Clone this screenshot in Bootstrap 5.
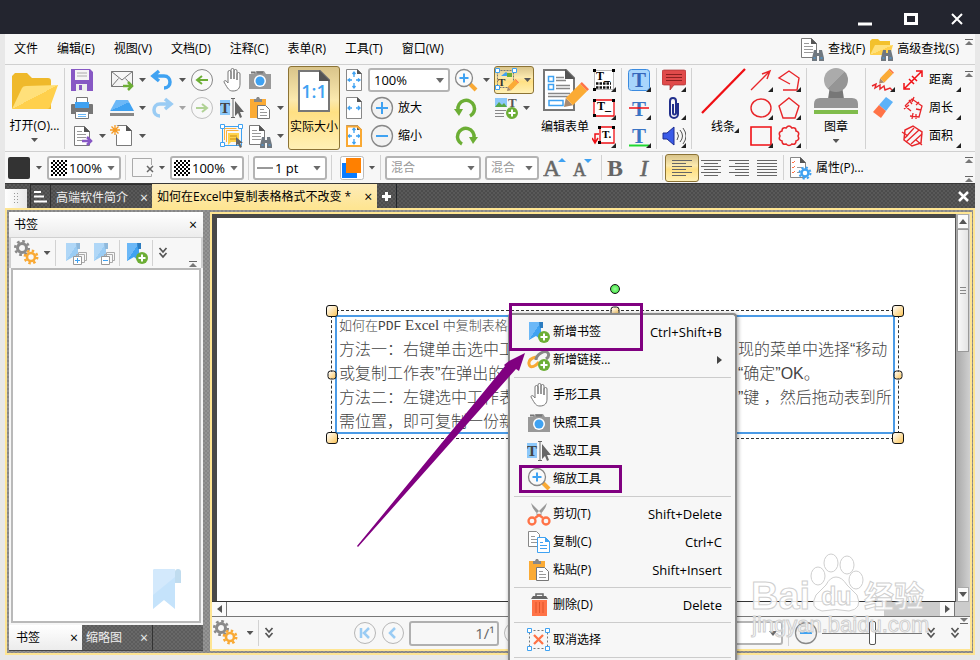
<!DOCTYPE html>
<html lang="zh-CN">
<head>
<meta charset="utf-8">
<meta name="viewport" content="width=device-width, initial-scale=1">
<title>PDF 编辑器</title>
<link href="https://cdn.jsdelivr.net/npm/bootstrap@5.3.0/dist/css/bootstrap.min.css" rel="stylesheet">
<style>
  :root { --gold: #fee592; --bar: #f7f7f7; --line: #d0d0d0; --purple: #800080; }
  body { font: 12px/16px "Open Sans", "Noto Sans CJK SC", sans-serif; background: #e8e8e8; color: #000; }
  button { font: inherit; color: inherit; background: none; border: 0; padding: 0; line-height: 16px; }
  svg { display: block; flex: none; }
  .app-title { height: 34px; background: #23252f; }
  .app-title button { width: 46px; height: 34px; display: flex; align-items: center; justify-content: center; padding-top: 4px; }
  .app-main { margin: 0 5px; }
  .bar-menu { height: 31px; background: var(--bar); border-bottom: 1px solid var(--line); }
  .bar-menu .item { padding: 0 9px; margin-right: 1px; }
  .bar-ribbon { height: 87px; background: var(--bar); border-bottom: 1px solid var(--line); padding-top: 1px; }
  .bar-format { height: 31px; background: var(--bar); padding-left: 2px; }
  .vsep { width: 1px; background: #d2d2d2; align-self: stretch; margin: 2px 5px; flex: none; }
  .bar-format .vsep { margin: 3px 4px; }
  .bar-format .tight { margin: 3px 2px; }
  .stack { display: flex; flex-direction: column; flex: none; }
  .gap-after { margin-right: 6px; }
  .ic { width: 24px; height: 28px; display: flex; align-items: center; justify-content: center; flex: none; position: relative; }
  .drop { width: 40px; justify-content: flex-start; gap: 5px; }
  .drop::after, .caret::after { content: ""; width: 7px; height: 4px; background: #555; clip-path: polygon(0 0, 100% 0, 50% 100%); }
  .caret { width: 16px; height: 28px; display: flex; align-items: center; justify-content: center; }
  .caret.low { height: 12px; }
  .more::after { content: ""; position: absolute; right: 0; bottom: 2px; width: 5px; height: 5px; background: #222; clip-path: polygon(100% 0, 100% 100%, 0 100%); }
  .faded { opacity: .5; }
  .tall { display: flex; flex-direction: column; align-items: center; width: 52px; height: 84px; position: relative; flex: none; white-space: nowrap; }
  .tall.wide { width: 59px; }
  .tall.mid { width: 54px; }
  .tall.slim { width: 48px; }
  .hot { background: linear-gradient(#d9c48a, #fbe9ae 40%, #ffe083 55%, #fff0b5); border: 1px solid #8c7335; border-radius: 3px; }
  .pick { display: flex; align-items: center; position: relative; width: 74px; height: 24px; background: #fff; border: 2px solid #b4b4b4; border-radius: 3px; padding-left: 2px; flex: none; }
  .pick.zoomer { width: 82px; margin: 2px 0; }
  .pick.face { width: 96px; }
  .pick.size { width: 54px; }
  .pick.view { width: 150px; }
  .pick::after { content: ""; position: absolute; right: 4px; top: 8px; width: 8px; height: 5px; background: #6a6a6a; clip-path: polygon(0 0, 100% 0, 50% 100%); }
  .pick select { appearance: none; border: 0; background: none; flex: 1; min-width: 0; padding: 0 2px; font-size: 13px; line-height: 18px; outline: 0; color: #000; }
  .pick select.dim { font-size: 12px; color: #999; }
  .check { width: 16px; height: 16px; background: conic-gradient(#000 25%, #fff 0 50%, #000 0 75%, #fff 0) 0 0/4px 4px; }
  .zoomlab { width: 78px; height: 28px; display: flex; align-items: center; gap: 4px; padding-left: 2px; }
  .overflow-col { width: 12px; padding: 4px 2px; }
  .weave { background: repeating-conic-gradient(#4c4c4c 0 25%, #595959 0 50%) 0 0/4px 4px; }
  .bar-tabs { height: 25px; border-top: 1px solid #383838; color: #eee; }
  .bar-tabs .grip { width: 22px; background: linear-gradient(90deg, #fff, #e8e8e8); margin-top: 5px; }
  .bar-tabs .doc { gap: 12px; padding: 2px 4px 0 5px; border: 1px solid #2f2f2f; border-width: 1px 0 0 1px; }
  .bar-tabs .listing { width: 20px; padding: 0 3px; margin-left: 3px; }
  .bar-tabs .active-doc { background: linear-gradient(#fdebb8, var(--gold)); color: #000; padding: 1px 5px 0 5px; gap: 13px; }
  .bar-tabs .closer { padding: 0 6px; }
  .x { font-size: 14px; line-height: 12px; }
  .work { background: repeating-conic-gradient(#868686 0 25%, #949494 0 50%) 0 0/4px 4px; border: 2px solid var(--gold); padding: 2px 1px 2px 2px; gap: 7px; margin-bottom: 5px; min-height: 0; }
  .side { width: 194px; }
  .side-head { height: 25px; background: linear-gradient(#fff, #ececec); padding: 0 6px 0 5px; }
  .side-tools { height: 31px; background: var(--bar); border: 1px solid var(--line); border-width: 1px 2px 0; }
  .side-tools .vsep { margin: 2px 5px 2px 3px; }
  .side-list { background: #fff; border: 2px solid #f6f6f6; border-top: 0; box-shadow: inset 0 0 0 2px #b9b9b9; padding: 0 20px 14px; }
  .side-tabs { height: 26px; background: repeating-conic-gradient(#5c5c5c 0 25%, #686868 0 50%) 0 0/4px 4px; color: #eee; border-bottom: 1px solid #444; }
  .side-tabs .t1 { width: 73px; background: linear-gradient(#fff, #ececec); color: #000; padding: 0 4px 0 7px; }
  .side-tabs .t2 { width: 71px; padding: 0 4px; border-right: 1px solid #333; }
  .docframe { border: 2px solid var(--gold); min-width: 0; background: var(--bar); }
  .doc-row { min-height: 0; }
  .canvas { background: #484848; padding: 4px 0 0 5px; border-bottom: 1px solid #333; min-width: 0; }
  .page { background: #fff; position: relative; overflow: hidden; height: 100%; }
  .vscroll { width: 15px; background: linear-gradient(90deg, #a8a8a8, #d0d0d0); border-left: 1px solid #555; padding: 0 1px; }
  .vscroll .end { height: 15px; background: #fafafa; border: 1px solid #aaa; display: flex; align-items: center; justify-content: center; }
  .vscroll .thumb { height: 123px; background: linear-gradient(90deg, #f8f8f8, #e4e4e4); border: 1px solid #999; display: flex; align-items: center; justify-content: center; }
  .hscroll { height: 15px; border-bottom: 1px solid #777; background: #ccc; padding-right: 15px; }
  .hscroll .end { width: 15px; background: #fafafa; border-right: 1px solid #777; display: flex; align-items: center; justify-content: center; }
  .hscroll .bar { background: #fafafa; }
  .hscroll .rest { width: 56px; }
  .status { height: 32px; padding: 0 2px; }
  .status .vsep { margin: 3px 5px; }
  .status .last { margin-left: 14px; }
  .pageno { width: 90px; height: 25px; border: 2px solid #b0b0b0; border-radius: 3px; background: var(--bar); text-align: right; font-size: 15px; padding: 0 2px; color: #666; }
  .track { width: 100px; height: 24px; appearance: none; background: linear-gradient(#777, #777) 0 50%/100% 1px no-repeat; margin: 0 4px; }
  .track::-webkit-slider-thumb { appearance: none; width: 7px; height: 24px; border: 1px solid #555; border-radius: 2px; background: #fff; }
  .annot { position: absolute; left: 114px; top: 92px; width: 568px; height: 129px; border: 1px dashed #333; }
  .annot .frame { position: absolute; inset: 4px 3px; border: 2px solid #4a9ae6; padding: 0 0 0 2px; overflow: hidden; font: 16px/24px "Liberation Sans", "Noto Sans CJK SC", sans-serif; font-weight: 300; color: #444; white-space: nowrap; }
  .annot .cols { display: grid; grid-template-columns: 1fr 155px; }
  .annot .first { font-size: 13px; line-height: 17px; padding-bottom: 3px; }
  .annot .first b { font: 15px/16px "Liberation Serif", serif; }
  .annot .first i { font: 13px/16px "Liberation Mono", monospace; }
  .knob { position: absolute; width: 12px; height: 12px; border: 1px solid #111; border-radius: 3px; background: linear-gradient(135deg, #fff, #fcc65a); transform: translate(-50%, -50%); }
  .knob.sm { width: 9px; height: 9px; }
  .knob.rot { top: -22px; width: 10px; height: 10px; border-radius: 50%; background: radial-gradient(#9f9, #3d3); }
  .popup { position: absolute; left: 508px; top: 313px; width: 229px; height: 347px; overflow: hidden; background: var(--bar); border: 2px solid #8a8a8a; border-bottom: 0; border-radius: 4px 4px 0 0; padding: 3px 4px; box-shadow: 1px 1px 4px rgba(0,0,0,.4); }
  .popup button { display: flex; align-items: center; width: 100%; height: 28px; padding: 0 9px 0 13px; gap: 2px; text-align: left; }
  .popup kbd { margin-left: auto; background: none; color: #000; font: 13px/16px "Open Sans", sans-serif; padding: 0; }
  .popup hr { margin: 3px 0; border: 0; border-top: 1px solid #ccc; opacity: 1; }
  .note { position: absolute; border: 3px solid var(--purple); }
  .note-a { left: 509px; top: 303px; width: 134px; height: 48px; }
  .note-b { left: 519px; top: 465px; width: 103px; height: 28px; }
  .over { position: absolute; left: 0; top: 0; pointer-events: none; }
</style>
<script src="https://cdn.jsdelivr.net/npm/bootstrap@5.3.0/dist/js/bootstrap.bundle.min.js"></script>
</head>
<body class="vh-100 d-flex flex-column overflow-hidden position-relative">

<svg width="0" height="0" class="position-absolute" aria-hidden="true">
  <defs>
    <linearGradient id="blueg" x1="0" y1="0" x2="1" y2="1"><stop offset=".5" stop-color="#6cb8f7"/><stop offset=".5" stop-color="#3fa2f2"/></linearGradient>
    <linearGradient id="greyg" x1="0" y1="0" x2="1" y2="1"><stop offset=".5" stop-color="#ababab"/><stop offset=".5" stop-color="#959595"/></linearGradient>
    <linearGradient id="yelg" x1="0" y1="0" x2="1" y2="1"><stop offset=".5" stop-color="#ffe07a"/><stop offset=".5" stop-color="#ffd04c"/></linearGradient>
  </defs>
</svg>
<svg class="d-none" aria-hidden="true">
  <symbol id="paper" viewBox="0 0 24 24"><path d="M4.500 2.500h10l5 5v14h-15z" fill="#fff" stroke="#7a7a7a"/><path d="M14 2v6h6z" fill="#555"/><path d="M7 7.500h5M7 10.500h9M7 13.500h9M7 16.500h9" stroke="#999"/></symbol>
  <symbol id="save" viewBox="0 0 24 24"><path d="M1 1h19l3 3v19H1z" fill="#8758c4"/><path d="M5 2h14v10H5z" fill="#f5f5f5"/><path d="M7 5h10M7 8h10" stroke="#aaa"/><path d="M6 16h11v7H6z" fill="#eee"/><path d="M9 17h3v5H9z" fill="#8758c4"/></symbol>
  <symbol id="print" viewBox="0 0 24 24"><path d="M6.500 1.500h11v7h-11z" fill="#fff" stroke="#777"/><path d="M1 9q0-1 1-1h20q1 0 1 1v9H1z" fill="#777"/><path d="M5 6h14v6H5z" fill="#3fa2f2"/><path d="M5.500 15.500h13v7h-13z" fill="#fff" stroke="#777"/><path d="M8 18.500h8M8 20.500h8" stroke="#6cb8f7"/></symbol>
  <symbol id="export" viewBox="0 0 24 24"><use href="#paper"/><path d="M12 17h8M17 13l4 4-4 4" fill="none" stroke="#8758c4" stroke-width="2.500"/></symbol>
  <symbol id="mail" viewBox="0 0 24 24"><path d="M1.500 3.500h21v15h-21zl10.500 8.500L22.500 3.500M1.500 18.500l7-8M22.500 18.500l-7-8" fill="#f4f4f4" stroke="#777"/><path d="M13 18h8M18 14l4 4-4 4" fill="none" stroke="#6cae35" stroke-width="2.500"/></symbol>
  <symbol id="scan" viewBox="0 0 24 24"><path d="M6 4h12l6 11H0z" fill="url(#blueg)"/><path d="M0 17h24v3H0z" fill="#888"/></symbol>
  <symbol id="newdoc" viewBox="0 0 24 24"><path d="M6.500 1.500h10l5 5v15h-15z" fill="#fff" stroke="#7a7a7a"/><path d="M16 1v6h6z" fill="#555"/><circle cx="5" cy="6" r="5" fill="#f7f7f7"/><path d="M5 1v10M0 6h10M1.500 2.500l7 7M8.500 2.500l-7 7" stroke="#f59a23" stroke-width="1.300"/></symbol>
  <symbol id="undo" viewBox="0 0 24 24"><path d="M9 3 3 8l6 5M4 8h10c8 0 8 12 0 12" fill="none" stroke="#3fa2f2" stroke-width="3.500"/></symbol>
  <symbol id="redo" viewBox="0 0 24 24"><path d="M15 3l6 5-6 5M20 8H10C2 8 2 20 10 20" fill="none" stroke="#3fa2f2" stroke-width="3.500"/></symbol>
  <symbol id="back" viewBox="0 0 24 24"><circle cx="12" cy="12" r="10.500" fill="#f9f9f9" stroke="#888"/><path d="M18 12H8M12 8l-5 4 5 4" fill="none" stroke="#6cae35" stroke-width="2"/></symbol>
  <symbol id="fwd" viewBox="0 0 24 24"><circle cx="12" cy="12" r="10.500" fill="#f9f9f9" stroke="#888"/><path d="M6 12h10M12 8l5 4-5 4" fill="none" stroke="#6cae35" stroke-width="2"/></symbol>
  <symbol id="hand" viewBox="0 0 24 24"><path d="M8 13V4a1.500 1.500 0 0 1 3 0v7V2a1.500 1.500 0 0 1 3 0v9V3a1.500 1.500 0 0 1 3 0v9V6a1.500 1.500 0 0 1 3 0v10c0 4-2 7-7 7-4 0-5-2-9-9 0-2 2-2 4 1z" fill="#fff" stroke="#777"/></symbol>
  <symbol id="camera" viewBox="0 0 24 24"><path d="M1 6h5l2-3h8l2 3h5v15H1z" fill="#999"/><path d="M3 4.500h4M9 4.500h6" stroke="#777" stroke-width="2"/><circle cx="12" cy="13" r="6" fill="#fff"/><circle cx="12" cy="13" r="4.500" fill="#3fa2f2"/></symbol>
  <symbol id="seltext" viewBox="0 0 24 24"><path d="M0 4h10v15H0z" fill="#8cc8fa"/><text x="0" y="17" font-family="Liberation Serif" font-weight="bold" font-size="15" fill="#444">T</text><path d="M11 2.500h4M13 3v18M11 21.500h4" stroke="#666"/><path d="M15 5v15l3-3 2 5 2-1-2-5h4z" fill="#666"/></symbol>
  <symbol id="selobj" viewBox="0 0 24 24"><path d="M2.500 2.500h19v19h-19z" fill="none" stroke="#3fa2f2"/><path d="M4.500 16V4.500h12M6.500 18V6.500h12" stroke="#fbb03b" fill="none"/><path d="M8 9h11v9h-8l-3 3z" fill="#ffd24c"/><path d="M10 12h7M10 15h7" stroke="#c88a10"/><path d="M.500.500h4v4h-4zM18.500.500h4v4h-4zM.500 18.500h4v4h-4z" fill="#fff" stroke="#3fa2f2"/><path d="M16 13v9l2-2 2 4 2-1-2-4h3z" fill="#666"/></symbol>
  <symbol id="paste" viewBox="0 0 24 24"><path d="M2 3h16v19H2z" fill="#fbab35"/><path d="M6 3h2l1-2h2l1 2h2v3H6z" fill="#888"/><path d="M9.500 9.500h8l4 4v9h-12z" fill="#fff" stroke="#777"/><path d="M12 13.500h4M12 16.500h7M12 19.500h7" stroke="#999"/></symbol>
  <symbol id="bino" viewBox="0 0 12 12"><path d="M2 1h3v3h2V1h3l2 8v3H7V7H5v5H0V9z" fill="#707880"/><path d="M1.500 9h2M8.500 9h2" stroke="#3fa2f2"/></symbol>
  <symbol id="finddoc" viewBox="0 0 24 24"><use href="#paper" x="-3" y="-1" width="24" height="24"/><use href="#bino" x="12" y="12" width="12" height="12"/></symbol>
  <symbol id="findadv" viewBox="0 0 24 24"><path d="M1 18V4l2-2h6l2 2h10v14z" fill="#f3c12c"/><path d="M1 18 6 8h18l-3 10z" fill="url(#yelg)"/><use href="#bino" x="12" y="12" width="12" height="12"/></symbol>
  <symbol id="fitp" viewBox="0 0 20 24"><path d="M2.500 1.500h11l4 4v17h-15z" fill="#fff" stroke="#888"/><path d="M13 1v5h5z" fill="#555"/><path d="M10 4v5M10 15v5M4 12h4M12 12h4M8.500 6 10 4l1.500 2M8.500 18l1.500 2 1.500-2M6 10.500 4 12l2 1.500M14 10.500l2 1.500-2 1.500" stroke="#3fa2f2" fill="none" stroke-width="1.300"/></symbol>
  <symbol id="fitw" viewBox="0 0 20 24"><path d="M2.500 1.500h11l4 4v17h-15z" fill="#fff" stroke="#888"/><path d="M13 1v5h5z" fill="#555"/><path d="M4 12h4M12 12h4M6 10 4 12l2 2M14 10l2 2-2 2" stroke="#3fa2f2" fill="none" stroke-width="1.300"/></symbol>
  <symbol id="mag" viewBox="0 0 24 24"><path d="m16 16 6 6" stroke="#f9a934" stroke-width="4"/><circle cx="10" cy="10" r="8.500" fill="#fafafa" stroke="#888" stroke-width="1.300"/><path d="M5.500 10h9M10 5.500v9" stroke="#3fa2f2" stroke-width="2"/></symbol>
  <symbol id="plusc" viewBox="0 0 24 24"><circle cx="12" cy="12" r="10.500" fill="#f2f2f2" stroke="#888" stroke-width="1.300"/><path d="M6 12h12M12 6v12" stroke="#3fa2f2" stroke-width="2"/></symbol>
  <symbol id="minusc" viewBox="0 0 24 24"><circle cx="12" cy="12" r="10.500" fill="#f2f2f2" stroke="#888" stroke-width="1.300"/><path d="M6 12h12" stroke="#3fa2f2" stroke-width="2"/></symbol>
  <symbol id="rotl" viewBox="0 0 24 24"><path d="M16 20a8.300 8.300 0 1 0-12-6" fill="none" stroke="#6cae35" stroke-width="3.500"/><path d="M0 13h9l-4 7z" fill="#6cae35"/></symbol>
  <symbol id="rotr" viewBox="0 0 24 24"><path d="M8 20a8.300 8.300 0 1 1 12-6" fill="none" stroke="#6cae35" stroke-width="3.500"/><path d="M24 13h-9l4 7z" fill="#6cae35"/></symbol>
  <symbol id="pencil" viewBox="0 0 14 14"><path d="m0 14 1-5 4 4z" fill="#a88a70"/><path d="M1 9 9 1l4 4-8 8z" fill="#fbab35"/><path d="m9 1 1-1 4 4-1 1z" fill="#ff7347"/></symbol>
  <symbol id="editobj" viewBox="0 0 24 24"><path d="M2.500 2.500h16v17h-16z" fill="none" stroke="#777" stroke-dasharray="2 1"/><path d="M6 8l5-4 5 4z" fill="#3fa2f2"/><path d="M12 5h5v4h-5z" fill="#6cae35"/><text x="3" y="18" font-family="Liberation Serif" font-weight="bold" font-size="11" fill="#333">T</text><path d="M.500.500h4v4h-4zM17.500.500h4v4h-4zM.500 17.500h4v4h-4z" fill="#fff" stroke="#3fa2f2"/><use href="#pencil" x="12" y="11" width="12" height="12"/></symbol>
  <symbol id="addobj" viewBox="0 0 24 24"><path d="M1 2h12v9H1z" fill="#8cc8fa"/><path d="m1 11 4-5 3 3 2-2 3 4z" fill="#58a848"/><text x="14" y="11" font-family="Liberation Serif" font-weight="bold" font-size="13" fill="#555">T</text><path d="M1 14.500h11M1 17.500h9M1 20.500h9" stroke="#888"/><circle cx="18" cy="17" r="6" fill="#6cae35"/><path d="M14.500 17h7M18 13.500v7" stroke="#fff" stroke-width="2"/></symbol>
  <symbol id="tb1" viewBox="0 0 24 24"><path d="M2.500 2.500h19v19h-19z" fill="#fff" stroke="#777" stroke-dasharray="1 1"/><text x="4" y="12" font-family="Liberation Serif" font-weight="bold" font-size="12">T_</text><path d="M4 15.500h15M4 19.500h15" stroke="#111" stroke-width="2.500" stroke-dasharray="2.500 1"/><path d="M1 1h3v3H1zM20 1h3v3h-3zM1 20h3v3H1z"/></symbol>
  <symbol id="tb2" viewBox="0 0 24 24"><path d="M2 4h20v16H2z" fill="#fff" stroke="#f00f14" stroke-width="1.300"/><text x="5" y="14" font-family="Liberation Serif" font-weight="bold" font-size="12">T_</text><path d="M1 3h3v3H1zM20 3h3v3h-3zM1 18h3v3H1z"/></symbol>
  <symbol id="tb3" viewBox="0 0 24 24"><path d="M8 3h14v16H8z" fill="#fff" stroke="#f00f14" stroke-width="1.300"/><text x="10" y="14" font-family="Liberation Serif" font-weight="bold" font-size="11">T.</text><path d="M7 10H3v8M0 14l3 5 3-5" stroke="#f00f14" fill="none" stroke-width="1.500"/><path d="M6 2h3v3H6zM20 2h3v3h-3zM6 17h3v3H6z"/></symbol>
  <symbol id="th1" viewBox="0 0 24 24"><rect x="1.500" y="1.500" width="21" height="21" rx="3" fill="#a8d6fc" stroke="#3b8be0"/><text x="5" y="19" font-family="Liberation Serif" font-weight="bold" font-size="21" fill="#3566bb">T</text></symbol>
  <symbol id="th2" viewBox="0 0 24 24"><text x="5" y="20" font-family="Liberation Serif" font-weight="bold" font-size="21" fill="#3b74c4">T</text><path d="M2 12h20" stroke="#f00f14" stroke-width="1.500"/></symbol>
  <symbol id="th3" viewBox="0 0 24 24"><text x="5" y="19" font-family="Liberation Serif" font-weight="bold" font-size="21" fill="#3b74c4">T</text><path d="M2 21.500h20" stroke="#20d830" stroke-width="2"/></symbol>
  <symbol id="comment" viewBox="0 0 24 24"><path d="M2 2h20q2 0 2 2v11q0 2-2 2H12l-4 5v-5H2q-2 0-2-2V4q0-2 2-2z" fill="#e04a4a" stroke="#a83030" stroke-width=".7"/><path d="M4 6.500h16M4 9.500h16M4 12.500h16" stroke="#8c2020"/></symbol>
  <symbol id="clip" viewBox="0 0 24 24"><path d="M16 7v11a4 4 0 0 1-8 0V5a3 3 0 0 1 6 0v12a1.500 1.500 0 0 1-3 0V8" fill="none" stroke="#22308c" stroke-width="2"/></symbol>
  <symbol id="sound" viewBox="0 0 24 24"><path d="M1 9h4l7-6v18l-7-6H1z" fill="#3a5be8" stroke="#1c2c90"/><path d="M15 8q3 4 0 8M18 6q5 6 0 12M21 4q6 8 0 16" fill="none" stroke="#555"/></symbol>
  <symbol id="arrow" viewBox="0 0 24 24"><path d="M2 22 20 4M13 6l8-3-3 8" fill="none" stroke="#e8262a" stroke-width="1.400"/></symbol>
  <symbol id="oval" viewBox="0 0 24 24"><ellipse cx="12" cy="12" rx="10" ry="9" fill="none" stroke="#e8262a" stroke-width="1.400"/></symbol>
  <symbol id="rect" viewBox="0 0 24 24"><path d="M2 3h20v18H2z" fill="none" stroke="#f00f14" stroke-width="1.600"/></symbol>
  <symbol id="poly1" viewBox="0 0 24 24"><path d="m13 16-11-6L12 3l10 7-2 12H6" fill="none" stroke="#e8262a" stroke-width="1.400"/></symbol>
  <symbol id="poly2" viewBox="0 0 24 24"><path d="m12 2 10 8-4 12H6L2 10z" fill="none" stroke="#e8262a" stroke-width="1.400"/></symbol>
  <symbol id="cloud" viewBox="0 0 24 24"><path d="M9 4q3-4 6 0 4-1 4 3 4 1 2 5 2 4-2 5 0 4-4 3-3 3-6 0-4 1-4-3-4-1-2-5-2-4 2-5 0-4 4-3z" fill="none" stroke="#e8262a" stroke-width="1.600"/></symbol>
  <symbol id="draw" viewBox="0 0 24 24"><use href="#pencil" x="8" y="0" width="15" height="16"/><path d="M1 18l4-2-1 4 5-3v4l4-3 1 4 5-2 3 3" fill="none" stroke="#e8262a" stroke-width="1.400"/></symbol>
  <symbol id="eraser" viewBox="0 0 24 24"><path d="m15 1 7 5-7 9-7-6z" fill="#5cb2f8"/><path d="m8 9 7 6-5 7-8-6z" fill="#ff7347"/></symbol>
  <symbol id="dist" viewBox="0 0 24 24"><path d="M4 20 20 4M3 15v6h6M15 3h6v6M8 11l5 5M11 8l5 5" fill="none" stroke="#f00f14" stroke-width="1.500"/></symbol>
  <symbol id="perim" viewBox="0 0 24 24"><path d="M4 10 11 3l10 7-3 11-9-1M4 10l6 5M13 1l-2 5M18 6l-3 3M8 4l3 4M3 13l5-4M20 14l-5-1M12 17l-1 6M15 18v5" fill="none" stroke="#e8262a" stroke-width="1.300"/></symbol>
  <symbol id="areai" viewBox="0 0 24 24"><path d="m12 2 9 6-1 11-9 3-8-6 1-10z" fill="none" stroke="#e8262a" stroke-width="1.500"/><path d="m4 14 9-10M5 18 18 6M10 20 21 10M1 8l6 4M15 16l6 5" stroke="#e8262a" stroke-width="1.300"/></symbol>
  <symbol id="gears" viewBox="0 0 26 26"><g fill="none" stroke="#8a8a8a"><circle cx="8" cy="8" r="4.500" stroke-width="3"/><circle cx="8" cy="8" r="6.800" stroke-width="2.500" stroke-dasharray="2.700 2.640"/></g><g fill="none" stroke="#f9a934"><circle cx="17" cy="17" r="4" stroke-width="2.600"/><circle cx="17" cy="17" r="6.200" stroke-width="2.500" stroke-dasharray="2.400 2.470"/></g></symbol>
  <symbol id="props" viewBox="0 0 24 24"><path d="M2.500 1.500h10l5 5v15h-15z" fill="#fff" stroke="#888"/><path d="M12 1v6h6z" fill="#555"/><path d="m4 6 1 1 2-2M4 11l1 1 2-2M4 16l1 1 2-2" fill="none" stroke="#ff7347"/><path d="M9 11.500h5M9 16.500h3" stroke="#999"/><circle cx="17" cy="17" r="3.500" fill="#fff" stroke="#3fa2f2" stroke-width="2.500"/><circle cx="17" cy="17" r="5.500" fill="none" stroke="#3fa2f2" stroke-width="2" stroke-dasharray="2.200 2.120"/></symbol>
  <symbol id="ribbonmark" viewBox="0 0 24 24"><path d="M2 2h12v18l-5-4-7 4z" fill="url(#blueg)"/><path d="M12 2h4v6h-3z" fill="#2c7cc0"/></symbol>
  <symbol id="bmadd" viewBox="0 0 24 24"><use href="#ribbonmark"/><circle cx="17" cy="17" r="6" fill="#6cae35"/><path d="M13.500 17h7M17 13.500v7" stroke="#fff" stroke-width="2"/></symbol>
  <symbol id="bmexp" viewBox="0 0 24 24"><use href="#ribbonmark" opacity=".5"/><path d="M14.500 15V11.500h8v8H20M12.500 17v-3.500h8v8H18" fill="none" stroke="#aaa"/><path d="M9.500 15.500h8v8h-8z" fill="#fff" stroke="#999"/><path d="M11 19.500h5M13.500 17v5" stroke="#3fa2f2"/></symbol>
  <symbol id="bmcol" viewBox="0 0 24 24"><use href="#ribbonmark" opacity=".5"/><path d="M14.500 15V11.500h8v8H20M12.500 17v-3.500h8v8H18" fill="none" stroke="#aaa"/><path d="M9.500 15.500h8v8h-8z" fill="#fff" stroke="#999"/><path d="M11 19.500h5" stroke="#3fa2f2"/></symbol>
  <symbol id="linkadd" viewBox="0 0 24 24"><path d="M9 9q-8 2-7 7t7 1l3-3" fill="none" stroke="#f9a934" stroke-width="3"/><path d="M9 12q0-4 5-7t7 0-2 6" fill="none" stroke="#888" stroke-width="3"/><circle cx="17" cy="17" r="6" fill="#6cae35"/><path d="M13.500 17h7M17 13.500v7" stroke="#fff" stroke-width="2"/></symbol>
  <symbol id="cut" viewBox="0 0 24 24"><path d="M4 1q2 8 9 13l2-2zM20 1q-2 8-9 13l-2-2z" fill="#999"/><g fill="none" stroke="#ff7347" stroke-width="2.300"><circle cx="5" cy="19" r="3.500"/><circle cx="19" cy="19" r="3.500"/><path d="m8 16 4-3 4 3"/></g></symbol>
  <symbol id="copy" viewBox="0 0 24 24"><path d="M1.500 1.500h8l3 3v12h-11z" fill="#fff" stroke="#888"/><path d="M4 6.500h4M4 9.500h6M4 12.500h6" stroke="#999"/><path d="M10.500 7.500h8l4 4v11h-12z" fill="#fff" stroke="#3fa2f2"/><path d="M18 7v5h5z" fill="#3fa2f2"/><path d="M13 12.500h3M13 15.500h7M13 18.500h7" stroke="#3fa2f2"/></symbol>
  <symbol id="trash" viewBox="0 0 24 24"><path d="M9 3V1h7v2" fill="none" stroke="#666" stroke-width="1.500"/><path d="M4 6l2-3h13l2 3z" fill="#666"/><path d="M5 7h15v16H5z" fill="#ff7347"/><path d="M9 9v11M12.500 9v11M16 9v11" stroke="#e0542a"/></symbol>
  <symbol id="desel" viewBox="0 0 24 24"><path d="M2.500 2.500h18v18h-18z" fill="none" stroke="#777" stroke-dasharray="2 2"/><path d="m7 7 9 9M16 7l-9 9" stroke="#ff7347" stroke-width="2.300"/><path d="M.500.500h4v4h-4zM18.500.500h4v4h-4zM.500 18.500h4v4h-4zM18.500 18.500h4v4h-4z" fill="#fff" stroke="#3fa2f2"/></symbol>
  <symbol id="ovf" viewBox="0 0 8 8"><path d="M0 1.500h8" stroke="#666"/><path d="m0 7 4-4 4 4z" fill="#777"/></symbol>
  <symbol id="chev" viewBox="0 0 10 12"><path d="m1.500 1 3.500 4 3.500-4M1.500 6 5 10l3.500-4" fill="none" stroke="#555" stroke-width="1.700"/></symbol>
  <symbol id="al" viewBox="0 0 22 18"><path d="M1 1.500h20M1 4.500h14M1 7.500h20M1 10.500h14M1 13.500h20M1 16.500h14" stroke="#666"/></symbol>
  <symbol id="ac" viewBox="0 0 22 18"><path d="M1 1.500h20M4 4.500h14M1 7.500h20M4 10.500h14M1 13.500h20M4 16.500h14" stroke="#666"/></symbol>
  <symbol id="ar" viewBox="0 0 22 18"><path d="M1 1.500h20M7 4.500h14M1 7.500h20M7 10.500h14M1 13.500h20M7 16.500h14" stroke="#666"/></symbol>
  <symbol id="aj" viewBox="0 0 22 18"><path d="M1 1.500h20M1 4.500h20M1 7.500h20M1 10.500h20M1 13.500h20M1 16.500h20" stroke="#666"/></symbol>
</svg>

<header class="app-title d-flex justify-content-end">
  <button aria-label="最小化"><svg width="14" height="14"><path d="M0 12h14" stroke="#fff" stroke-width="3"/></svg></button>
  <button aria-label="最大化"><svg width="14" height="12"><path d="M1.500 1.500h11v9h-11z" fill="none" stroke="#fff" stroke-width="3"/></svg></button>
  <button aria-label="关闭"><svg width="12" height="12"><path d="m1 1 10 10M11 1 1 11" stroke="#fff" stroke-width="2"/></svg></button>
</header>

<main class="app-main flex-grow-1 d-flex flex-column">
  <nav class="bar-menu d-flex align-items-center" aria-label="菜单">
    <button class="item">文件</button><button class="item">编辑(E)</button><button class="item">视图(V)</button><button class="item">文档(D)</button><button class="item">注释(C)</button><button class="item">表单(R)</button><button class="item">工具(T)</button><button class="item">窗口(W)</button>
    <button class="ms-auto d-flex align-items-center gap-1"><svg width="24" height="24"><use href="#finddoc"/></svg>查找(F)</button>
    <button class="ms-1 me-1 d-flex align-items-center gap-1"><svg width="24" height="24"><use href="#findadv"/></svg>高级查找(S)</button>
    <span class="overflow-col align-self-start"><svg width="8" height="8"><use href="#ovf"/></svg></span>
  </nav>

  <section class="bar-ribbon d-flex" aria-label="工具栏">
    <button class="tall wide"><svg width="48" height="52" viewBox="0 0 48 52"><path d="M1 43V10l3-3h12l5 5h16q3 0 3 3v28z" fill="#efb92b"/><path d="M1 43 11 22q1-2 4-2l32-1-8 22q-1 2-3 2z" fill="url(#yelg)"/></svg><span>打开(O)...</span><span class="caret low"></span></button>
    <div class="vsep ms-0"></div>
    <div class="stack"><button class="ic" aria-label="保存"><svg width="24" height="24"><use href="#save"/></svg></button><button class="ic" aria-label="打印"><svg width="24" height="24"><use href="#print"/></svg></button><button class="ic drop" aria-label="导出"><svg width="24" height="24"><use href="#export"/></svg></button></div>
    <div class="stack"><button class="ic drop" aria-label="邮件"><svg width="24" height="24"><use href="#mail"/></svg></button><button class="ic drop" aria-label="扫描"><svg width="24" height="24"><use href="#scan"/></svg></button><button class="ic drop" aria-label="新建"><svg width="24" height="24"><use href="#newdoc"/></svg></button></div>
    <div class="stack"><button class="ic drop" aria-label="撤销"><svg width="24" height="24"><use href="#undo"/></svg></button><button class="ic drop faded" aria-label="重做"><svg width="24" height="24"><use href="#redo"/></svg></button></div>
    <div class="stack gap-after"><button class="ic" aria-label="后退"><svg width="24" height="24"><use href="#back"/></svg></button><button class="ic faded" aria-label="前进"><svg width="24" height="24"><use href="#fwd"/></svg></button></div>
    <div class="stack me-1"><button class="ic" aria-label="手形"><svg width="24" height="24"><use href="#hand"/></svg></button><button class="ic" aria-label="选取"><svg width="24" height="24"><use href="#seltext"/></svg></button><button class="ic" aria-label="选取注释"><svg width="24" height="24"><use href="#selobj"/></svg></button></div>
    <div class="stack"><button class="ic" aria-label="快照"><svg width="24" height="24"><use href="#camera"/></svg></button><button class="ic drop" aria-label="剪贴板"><svg width="24" height="24"><use href="#paste"/></svg></button><button class="ic drop" aria-label="查找文档"><svg width="24" height="24"><use href="#finddoc"/></svg></button></div>
    <button class="tall hot"><svg width="36" height="52" viewBox="0 0 36 52"><path d="M3 4h21l9 9v31H3z" fill="#fff" stroke="#777" stroke-width="2"/><path d="M23 3v11h11z" fill="#555"/><text x="18" y="31" text-anchor="middle" font-family="Open Sans" font-size="18" font-weight="600" fill="#3fa2f2">1:1</text></svg>实际大小</button>
    <div class="stack mx-1"><button class="ic w-auto" aria-label="适合页面"><svg width="20" height="24"><use href="#fitp"/></svg></button><button class="ic w-auto" aria-label="适合宽度"><svg width="20" height="24"><use href="#fitw"/></svg></button><button class="ic w-auto" aria-label="适合可见"><svg width="20" height="24"><use href="#fitp"/><path d="M3 2.500h10.500l3.500 3.500v16H3z" fill="none" stroke="#f9a934" stroke-width="2"/></svg></button></div>
    <div class="stack me-1"><div class="pick zoomer"><select aria-label="缩放"><option>100%</option></select></div><button class="zoomlab"><svg width="24" height="24"><use href="#plusc"/></svg>放大</button><button class="zoomlab"><svg width="24" height="24"><use href="#minusc"/></svg>缩小</button></div>
    <div class="stack"><button class="ic drop" aria-label="缩放工具"><svg width="24" height="24"><use href="#mag"/></svg></button><button class="ic" aria-label="左旋"><svg width="24" height="24"><use href="#rotl"/></svg></button><button class="ic" aria-label="右旋"><svg width="24" height="24"><use href="#rotr"/></svg></button></div>
    <div class="stack me-1"><button class="ic drop hot" aria-label="编辑内容"><svg width="24" height="24"><use href="#editobj"/></svg></button><button class="ic drop" aria-label="添加内容"><svg width="24" height="24"><use href="#addobj"/></svg></button></div>
    <button class="tall mid"><svg width="48" height="53" viewBox="0 0 48 53"><path d="M3 4h22l8 8v32H3z" fill="#fff" stroke="#777" stroke-width="2"/><path d="M24 3v10h10z" fill="#555"/><path d="M7.500 10.500h5v5h-5zM7.500 18.500h5v5h-5zM8 34.500h14v5H8z" fill="none" stroke="#3fa2f2" stroke-width="1.500"/><path d="M15 11.500h8M15 14.500h10M15 19.500h14M15 22.500h14M7 27.500h22M7 30.500h20" stroke="#888" stroke-width="1.500"/><use href="#pencil" x="23" y="16" width="25" height="25"/></svg>编辑表单</button>
    <div class="stack"><button class="ic more" aria-label="文本框"><svg width="24" height="24"><use href="#tb1"/></svg></button><button class="ic more" aria-label="文字框"><svg width="24" height="24"><use href="#tb2"/></svg></button><button class="ic more" aria-label="标注框"><svg width="24" height="24"><use href="#tb3"/></svg></button></div>
    <div class="vsep"></div>
    <div class="stack"><button class="ic more" aria-label="高亮"><svg width="24" height="24"><use href="#th1"/></svg></button><button class="ic more" aria-label="删除线"><svg width="24" height="24"><use href="#th2"/></svg></button><button class="ic more" aria-label="下划线"><svg width="24" height="24"><use href="#th3"/></svg></button></div>
    <div class="vsep"></div>
    <div class="stack"><button class="ic more" aria-label="注释"><svg width="24" height="24"><use href="#comment"/></svg></button><button class="ic more" aria-label="附件"><svg width="24" height="24"><use href="#clip"/></svg></button><button class="ic more" aria-label="声音"><svg width="24" height="24"><use href="#sound"/></svg></button></div>
    <div class="vsep"></div>
    <button class="tall"><svg width="48" height="53"><path d="m3 47 43-44" stroke="#f00f14" stroke-width="2.300"/></svg><span class="more position-relative px-1">线条</span></button>
    <div class="stack me-1"><button class="ic more" aria-label="箭头"><svg width="24" height="24"><use href="#arrow"/></svg></button><button class="ic more" aria-label="椭圆"><svg width="24" height="24"><use href="#oval"/></svg></button><button class="ic more" aria-label="矩形"><svg width="24" height="24"><use href="#rect"/></svg></button></div>
    <div class="stack"><button class="ic more" aria-label="折线"><svg width="24" height="24"><use href="#poly1"/></svg></button><button class="ic more" aria-label="多边形"><svg width="24" height="24"><use href="#poly2"/></svg></button><button class="ic more" aria-label="云形"><svg width="24" height="24"><use href="#cloud"/></svg></button></div>
    <div class="vsep"></div>
    <button class="tall slim"><svg width="46" height="53" viewBox="0 0 46 53"><path d="M17 20h12l2 13H15z" fill="#777"/><circle cx="23" cy="14" r="12" fill="url(#greyg)"/><path d="M1 42v-4q0-6 6-6h32q6 0 6 6v4z" fill="#959595"/><path d="M1 44h44v4H1z" fill="#80bc4c"/></svg>图章<span class="caret low"></span></button>
    <div class="vsep"></div>
    <div class="stack gap-after"><button class="ic more" aria-label="铅笔"><svg width="24" height="24"><use href="#draw"/></svg></button><button class="ic" aria-label="橡皮擦"><svg width="24" height="24"><use href="#eraser"/></svg></button></div>
    <div class="stack"><button class="ic more w-auto pe-2"><svg width="24" height="24" class="me-1"><use href="#dist"/></svg>距离</button><button class="ic more w-auto pe-2"><svg width="24" height="24" class="me-1"><use href="#perim"/></svg>周长</button><button class="ic more w-auto pe-2"><svg width="24" height="24" class="me-1"><use href="#areai"/></svg>面积</button></div>
    <span class="overflow-col ms-auto"><svg width="8" height="8"><use href="#ovf"/></svg></span>
  </section>

  <section class="bar-format d-flex align-items-center" aria-label="格式">
    <button class="ic" aria-label="填充颜色"><svg width="22" height="22"><rect width="22" height="22" rx="2" fill="#333"/></svg></button><button class="caret" aria-label="更多颜色"></button>
    <div class="pick"><span class="check"></span><select aria-label="填充不透明度"><option>100%</option></select></div>
    <div class="vsep"></div>
    <button class="ic" aria-label="边框颜色"><svg width="24" height="20"><path d="M2.500.500h19v18h-19z" fill="none" stroke="#aaa"/><path d="M17 7h7v9h-7z" fill="#f7f7f7"/><path d="m17 8 6 6M23 8l-6 6" stroke="#666" stroke-width="1.500"/></svg></button><button class="caret" aria-label="更多边框"></button>
    <div class="pick"><span class="check"></span><select aria-label="边框不透明度"><option>100%</option></select></div>
    <div class="vsep"></div>
    <div class="pick"><svg width="16" height="2"><path d="M0 1h16" stroke="#333"/></svg><select aria-label="线宽"><option>1 pt</option></select></div>
    <div class="vsep me-2"></div>
    <button class="ic" aria-label="文字颜色"><svg width="24" height="24"><rect x=".5" y=".5" width="23" height="23" rx="2" fill="#fff" stroke="#bbb"/><path d="M2 7h15v15H2z" fill="#0a7cff"/><path d="M6 2h15v15H6z" fill="#ff8000"/></svg></button><button class="caret" aria-label="更多文字颜色"></button>
    <div class="vsep ms-0"></div>
    <div class="pick face"><select class="dim" aria-label="字体"><option>混合</option></select></div>
    <div class="pick size ms-1"><select class="dim" aria-label="字号"><option>混合</option></select></div>
    <button class="ic ms-1" aria-label="增大字号"><svg width="24" height="26"><text x="0" y="21" font-family="Liberation Serif" font-size="24" stroke="#666" stroke-width=".5" fill="#666">A</text><path d="m15 7 4-4 4 4z" fill="#3fa2f2"/></svg></button>
    <button class="ic mx-1" aria-label="减小字号"><svg width="24" height="26"><text x="2" y="21" font-family="Liberation Serif" font-size="18" stroke="#666" stroke-width=".5" fill="#666">A</text><path d="m13 4 4 4 4-4z" fill="#3fa2f2"/></svg></button>
    <div class="vsep tight"></div>
    <button class="ic" aria-label="粗体"><svg width="20" height="26"><text x="1" y="21" font-family="Liberation Serif" font-weight="bold" font-size="24" fill="#666">B</text></svg></button>
    <button class="ic mx-1" aria-label="斜体"><svg width="20" height="26"><text x="6" y="21" font-family="Liberation Serif" font-style="italic" font-size="24" stroke="#666" stroke-width=".5" fill="#666">I</text></svg></button>
    <div class="vsep tight"></div>
    <button class="ic hot px-3" aria-label="左对齐"><svg width="22" height="18"><use href="#al"/></svg></button>
    <button class="ic" aria-label="居中"><svg width="22" height="18"><use href="#ac"/></svg></button>
    <button class="ic ms-1" aria-label="右对齐"><svg width="22" height="18"><use href="#ar"/></svg></button>
    <button class="ic ms-1" aria-label="两端对齐"><svg width="22" height="18"><use href="#aj"/></svg></button>
    <div class="vsep"></div>
    <button class="d-flex align-items-center gap-1"><svg width="24" height="24"><use href="#props"/></svg>属性(P)...</button>
    <span class="overflow-col ms-auto align-self-stretch d-flex flex-column justify-content-between pb-0"><svg width="8" height="8"><use href="#ovf"/></svg><svg width="8" height="8"><use href="#ovf"/></svg></span>
  </section>

  <nav class="bar-tabs weave d-flex align-items-stretch" aria-label="文档标签">
    <span class="grip d-flex align-items-center justify-content-center"><svg width="6" height="14"><path d="M1.500 1v12M4.500 1v12" stroke="#999" stroke-dasharray="1 2"/></svg></span>
    <button class="doc listing" aria-label="标签列表"><svg width="13" height="12"><path d="M0 1h7M0 5.500h10M0 10.500h13" stroke="#fff" stroke-width="2"/></svg></button>
    <button class="doc d-flex align-items-center">高端软件简介<span class="x">×</span></button>
    <button class="active-doc d-flex align-items-center">如何在Excel中复制表格格式不改变 *<span class="x">×</span></button>
    <button class="px-1" aria-label="新标签"><svg width="11" height="11"><path d="M5.500 1v9M1 5.500h9" stroke="#fff" stroke-width="3"/></svg></button><span class="vsep m-0 bg-dark"></span>
    <button class="closer ms-auto" aria-label="关闭标签"><svg width="11" height="11"><path d="m1 1 9 9M10 1 1 10" stroke="#fff" stroke-width="2.500"/></svg></button>
  </nav>

  <div class="work flex-grow-1 d-flex">
    <aside class="side d-flex flex-column flex-shrink-0">
      <div class="side-head d-flex align-items-center justify-content-between">书签<button class="x" aria-label="关闭书签">×</button></div>
      <div class="side-tools d-flex align-items-center">
        <button class="ic ms-1" aria-label="选项"><svg width="26" height="26"><use href="#gears"/></svg></button><button class="caret" aria-label="更多选项"></button><div class="vsep ms-0 me-2"></div>
        <button class="ic" aria-label="展开"><svg width="24" height="24"><use href="#bmexp"/></svg></button><button class="ic ms-1" aria-label="折叠"><svg width="24" height="24"><use href="#bmcol"/></svg></button><div class="vsep"></div>
        <button class="ic" aria-label="新增书签"><svg width="24" height="24"><use href="#bmadd"/></svg></button><div class="vsep"></div>
        <button aria-label="更多"><svg width="10" height="12"><use href="#chev"/></svg></button>
        <svg width="8" height="8" class="ms-auto me-1 align-self-end"><use href="#ovf"/></svg>
      </div>
      <div class="side-list flex-grow-1 d-flex justify-content-end align-items-end"><svg width="28" height="40"><path d="M0 2q0-2 2-2h20v40l-11-9-11 9z" fill="#c5e3fb"/><path d="M0 2q0-2 2-2h20v8L0 26z" fill="#d3e9fc"/><path d="M22 14V3q0-3 3-3t3 3v11z" fill="#c0dcef"/></svg></div>
      <div class="side-tabs d-flex"><button class="t1 d-flex align-items-center justify-content-between">书签<span class="x">×</span></button><button class="t2 d-flex align-items-center justify-content-between">缩略图<span class="x">×</span></button></div>
    </aside>

    <section class="docframe flex-grow-1 d-flex flex-column">
      <div class="doc-row flex-grow-1 d-flex">
        <div class="canvas flex-grow-1">
          <div class="page">
            <div class="annot">
              <div class="frame">
                <div class="first">如何在<i>PDF</i> <b>Excel</b> 中复制表格</div>
                <div class="cols"><span>方法一：右键单击选中工</span><span>现的菜单中选择“移动</span></div>
                <div class="cols"><span>或复制工作表”在弹出的</span><span>“确定”OK。</span></div>
                <div class="cols"><span>方法二：左键选中工作表</span><span>”键 ，然后拖动表到所</span></div>
                <div>需位置，即可复制一份新</div>
              </div>
              <span class="knob start-0 top-0"></span><span class="knob start-100 top-0"></span><span class="knob start-0 top-100"></span><span class="knob start-100 top-100"></span>
              <span class="knob sm start-0 top-50"></span><span class="knob sm start-100 top-50"></span><span class="knob sm start-50 top-0"></span>
              <span class="knob rot start-50"></span>
            </div>
          </div>
        </div>
        <div class="vscroll d-flex flex-column"><span class="end"><svg width="8" height="5"><path d="m0 5 4-5 4 5z" fill="#555"/></svg></span><span class="thumb"><svg width="6" height="7"><path d="M0 .500h6M0 3.500h6M0 6.500h6" stroke="#888"/></svg></span><span class="end mt-auto"><svg width="8" height="5"><path d="m0 0 4 5 4-5z" fill="#555"/></svg></span></div>
      </div>
      <div class="hscroll d-flex"><span class="end"><svg width="5" height="8"><path d="M5 0 0 4l5 4z" fill="#555"/></svg></span><span class="bar flex-grow-1"></span><span class="rest"></span><span class="end"><svg width="5" height="8"><path d="m0 0 5 4-5 4z" fill="#555"/></svg></span></div>
      <div class="status d-flex align-items-center">
        <button class="ic" aria-label="选项"><svg width="26" height="26"><use href="#gears"/></svg></button><button class="caret ms-1" aria-label="更多选项"></button><div class="vsep ms-0"></div><button aria-label="更多"><svg width="10" height="12"><use href="#chev"/></svg></button>
        <div class="flex-grow-1 d-flex align-items-center justify-content-center gap-1">
          <button class="ic faded" aria-label="首页"><svg width="24" height="24"><circle cx="12" cy="12" r="10.500" fill="#f9f9f9" stroke="#777"/><path d="M8 7v10M16 7l-5 5 5 5" fill="none" stroke="#3fa2f2" stroke-width="2.500"/></svg></button>
          <button class="ic faded" aria-label="上一页"><svg width="24" height="24"><circle cx="12" cy="12" r="10.500" fill="#f9f9f9" stroke="#777"/><path d="m14 7-5 5 5 5" fill="none" stroke="#3fa2f2" stroke-width="2.500"/></svg></button>
          <input class="pageno" aria-label="页码" value="1/¹">
          <button class="ic faded" aria-label="下一页"><svg width="24" height="24"><circle cx="12" cy="12" r="10.500" fill="#f9f9f9" stroke="#777"/></svg></button>
          <button class="ic faded" aria-label="末页"><svg width="24" height="24"><circle cx="12" cy="12" r="10.500" fill="#f9f9f9" stroke="#777"/></svg></button>
        </div>
        <div class="pick view"><select aria-label="视图缩放"><option></option></select></div><div class="vsep"></div>
        <button class="ic" aria-label="缩小"><svg width="24" height="24"><use href="#minusc"/></svg></button>
        <input type="range" class="track" aria-label="缩放滑块" value="50">
        <button aria-label="更多缩放"><svg width="10" height="12"><use href="#chev"/></svg></button>
        <button class="last" aria-label="更多状态"><svg width="10" height="12"><use href="#chev"/></svg></button>
        <svg width="8" height="8" class="align-self-start"><path d="M0 6.500h8" stroke="#666"/><path d="m0 1 4 4 4-4z" fill="#777"/></svg>
      </div>
    </section>
  </div>
</main>

<div class="popup">
  <button><svg width="24" height="24"><use href="#bmadd"/></svg>新增书签<kbd>Ctrl+Shift+B</kbd></button>
  <button><svg width="24" height="24"><use href="#linkadd"/></svg>新增链接...<svg width="5" height="8" class="ms-auto"><path d="m0 0 5 4-5 4z" fill="#444"/></svg></button>
  <hr>
  <button><svg width="24" height="24"><use href="#hand"/></svg>手形工具</button>
  <button><svg width="24" height="24"><use href="#camera"/></svg>快照工具</button>
  <button><svg width="24" height="24"><use href="#seltext"/></svg>选取工具</button>
  <button><svg width="24" height="24"><use href="#mag"/></svg>缩放工具</button>
  <hr>
  <button><svg width="24" height="24"><use href="#cut"/></svg>剪切(T)<kbd>Shift+Delete</kbd></button>
  <button><svg width="24" height="24"><use href="#copy"/></svg>复制(C)<kbd>Ctrl+C</kbd></button>
  <button><svg width="24" height="24"><use href="#paste"/></svg>粘贴(P)<kbd>Shift+Insert</kbd></button>
  <hr>
  <button><svg width="24" height="24"><use href="#trash"/></svg>删除(D)<kbd>Delete</kbd></button>
  <hr>
  <button><svg width="24" height="24"><use href="#desel"/></svg>取消选择</button>
  <hr>
</div>

<div class="note note-a"></div>
<div class="note note-b"></div>
<svg class="over" width="980" height="660" aria-hidden="true">
  <path d="M357 546 505 366l-1-1 5-4 16-8-6 18-3-2L358 547z" fill="#800080"/>
  <g fill="#fff" fill-opacity=".85" stroke="#cfcfcf" font-family="Liberation Sans" font-weight="bold">
    <ellipse cx="818" cy="576" rx="7" ry="9"/><ellipse cx="831" cy="563" rx="7" ry="9"/><ellipse cx="847" cy="565" rx="7" ry="9"/><ellipse cx="856" cy="580" rx="7" ry="9"/>
    <path d="M836 577q6 0 11 8l10 10q6 14-8 16-13-3-27 0-13-3-6-16l10-10q4-8 10-8z"/>
    <text x="751" y="609" font-size="38">Bai</text><text x="821" y="605" font-size="25">du</text>
    <text x="864" y="607" font-size="30" font-family="Noto Sans CJK SC">经验</text>
    <text x="752" y="632" font-size="22" font-weight="normal">jingyan.baidu.com</text>
  </g>
</svg>
</body>
</html>
